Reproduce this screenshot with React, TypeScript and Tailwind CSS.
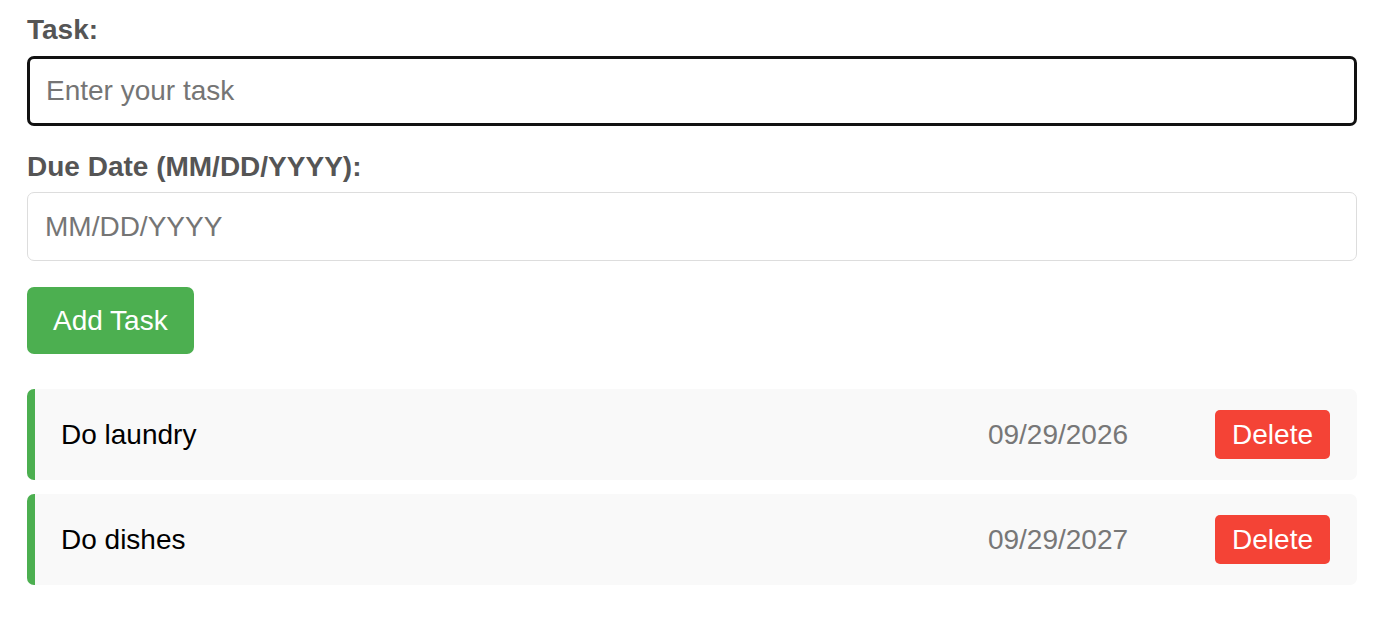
import React, { useState } from "react";

type Task = { id: number; text: string; date: string };

export default function App() {
  const [tasks, setTasks] = useState<Task[]>([
    { id: 1, text: "Do laundry", date: "09/29/2026" },
    { id: 2, text: "Do dishes", date: "09/29/2027" },
  ]);
  const [text, setText] = useState("");
  const [date, setDate] = useState("");

  const add = () => {
    if (!text.trim()) return;
    setTasks([...tasks, { id: Date.now(), text, date }]);
    setText("");
    setDate("");
  };

  return (
    <div className="min-h-screen bg-white px-[27px] pt-[14px] font-['Liberation_Sans',Arial,sans-serif] text-[28px] leading-[32px]">
      <label className="block font-bold text-[#555]">Task:</label>
      <input
        autoFocus
        value={text}
        onChange={(e) => setText(e.target.value)}
        placeholder="Enter your task"
        className="mt-[10px] block h-[70px] w-full rounded-[7px] border-[3px] border-[#111] bg-white px-[16px] text-[28px] text-black caret-black outline-none placeholder:text-[#757575]"
      />
      <label className="mt-[25px] block font-bold text-[#555]">Due Date (MM/DD/YYYY):</label>
      <input
        value={date}
        onChange={(e) => setDate(e.target.value)}
        placeholder="MM/DD/YYYY"
        className="mt-[9px] block h-[69px] w-full rounded-[7px] border border-[#ddd] bg-white px-[17px] text-[28px] text-black outline-none placeholder:text-[#757575]"
      />
      <button
        onClick={add}
        className="mt-[26px] block h-[67px] rounded-[7px] bg-[#4CAF50] px-[26px] text-[28px] text-white"
      >
        Add Task
      </button>
      <ul className="mt-[35px] flex flex-col gap-[14px]">
        {tasks.map((t) => (
          <li
            key={t.id}
            className="flex h-[91px] items-center rounded-[7px] border-l-[8px] border-[#4CAF50] bg-[#f9f9f9] pl-[26px] pr-[27px]"
          >
            <span className="flex-1 text-black">{t.text}</span>
            <span className="mr-[87px] text-[#777]">{t.date}</span>
            <button
              onClick={() => setTasks(tasks.filter((x) => x.id !== t.id))}
              className="h-[49px] rounded-[5px] bg-[#f44336] px-[17px] text-[28px] text-white"
            >
              Delete
            </button>
          </li>
        ))}
      </ul>
    </div>
  );
}
